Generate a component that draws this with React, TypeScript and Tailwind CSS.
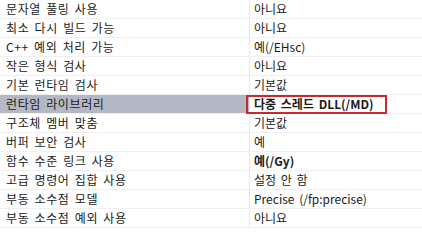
const rows: { name: string; value: string; bold?: boolean; selected?: boolean }[] = [
  { name: "문자열 풀링 사용", value: "아니요" },
  { name: "최소 다시 빌드 가능", value: "아니요" },
  { name: "C++ 예외 처리 가능", value: "예(/EHsc)" },
  { name: "작은 형식 검사", value: "아니요" },
  { name: "기본 런타임 검사", value: "기본값" },
  { name: "런타임 라이브러리", value: "다중 스레드 DLL(/MD)", bold: true, selected: true },
  { name: "구조체 멤버 맞춤", value: "기본값" },
  { name: "버퍼 보안 검사", value: "예" },
  { name: "함수 수준 링크 사용", value: "예(/Gy)", bold: true },
  { name: "고급 명령어 집합 사용", value: "설정 안 함" },
  { name: "부동 소수점 모델", value: "Precise (/fp:precise)" },
  { name: "부동 소수점 예외 사용", value: "아니요" },
];

export default function App() {
  return (
    <div className="h-[241px] w-[422px] overflow-hidden bg-white font-['Malgun_Gothic','Noto_Sans_CJK_KR',sans-serif] text-[12px] text-[#1a1a1a]">
      {rows.map((r) => (
        <div key={r.name} className="flex h-[19px] border-b border-[#f0f0f0]">
          <div
            className={`flex w-[249px] shrink-0 items-center pl-[6px] leading-none tracking-[0.6px] [word-spacing:2px] ${
              r.selected ? "bg-[#b4b8c4]" : ""
            }`}
          >
            {r.name}
          </div>
          <div className="w-px shrink-0 bg-[#e6e6e6]" />
          <div
            className={`relative flex flex-1 items-center pl-[4px] leading-none [word-spacing:2px] ${
              r.bold ? "font-bold" : ""
            }`}
          >
            {r.value}
            {r.selected && (
              <span className="pointer-events-none absolute left-[-4px] top-0 h-[19px] w-[141px] border-2 border-[#c8282e]" />
            )}
          </div>
        </div>
      ))}
    </div>
  );
}
